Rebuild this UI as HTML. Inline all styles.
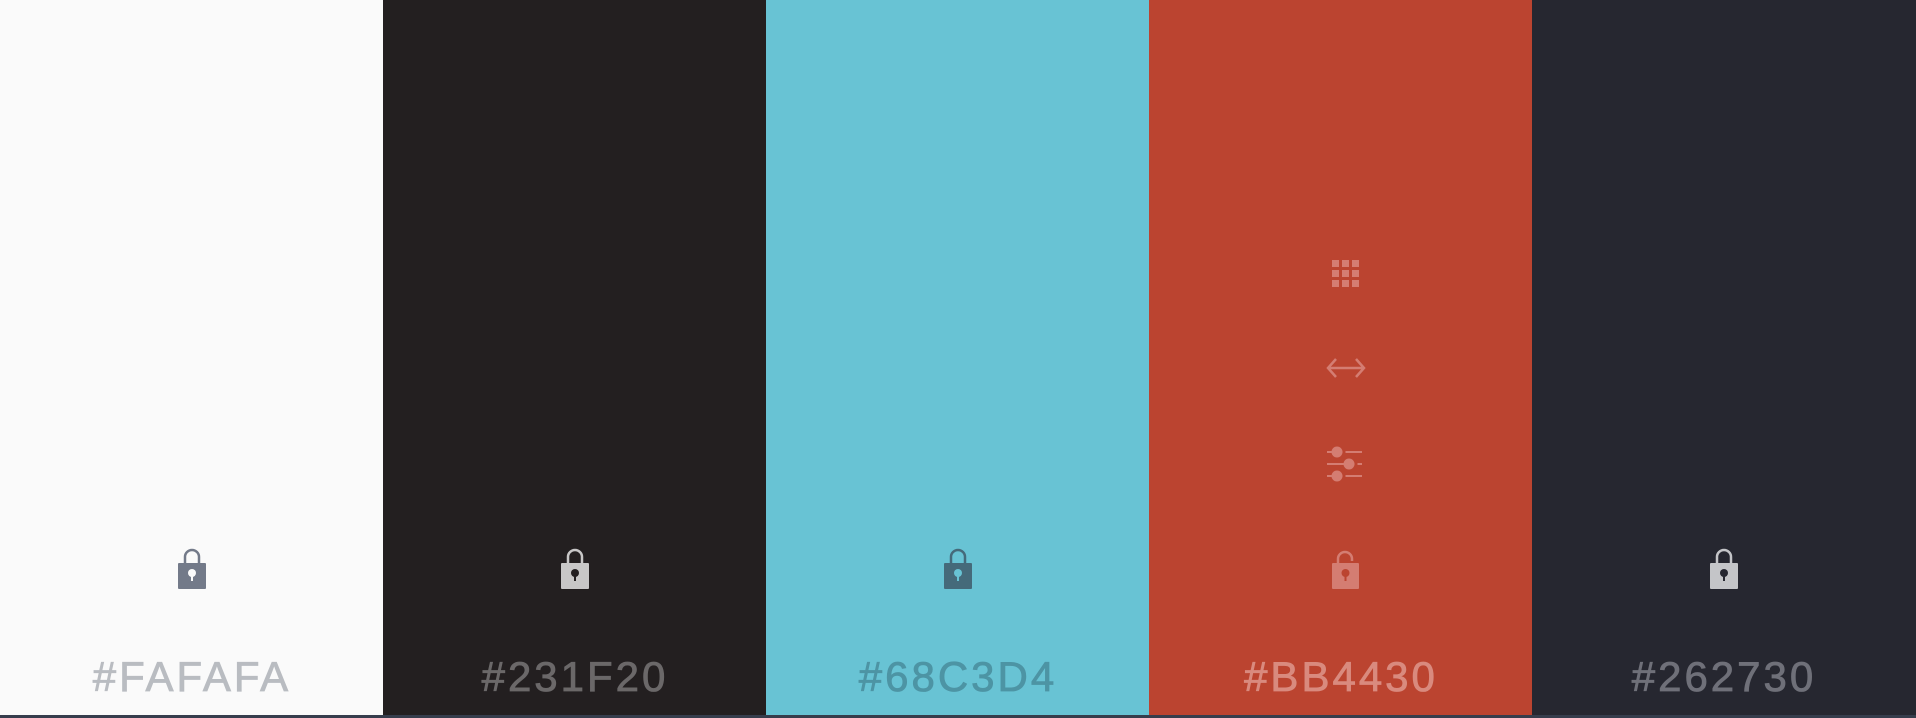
<!DOCTYPE html>
<html><head><style>
body{margin:0;width:1916px;height:718px;overflow:hidden;background:#363d4c;font-family:"Liberation Sans",sans-serif}
.c{position:absolute;top:0;height:715px;width:384px}
.t{position:absolute;left:0;right:0;top:654px;text-align:center;font-size:42px;letter-spacing:3px;line-height:46px;-webkit-text-stroke:0.8px currentColor}
.i{position:absolute}
</style></head><body>
<div class="c" style="left:0;background:#fafafa"><div class="t" style="color:#b9bcc1">#FAFAFA</div>
<svg class="i" style="left:177px;top:548px" width="30" height="42" viewBox="0 0 30 42"><path d="M8 16V9a7 7 0 0 1 14 0v7" fill="none" stroke="#737a89" stroke-width="2.5"/><rect x="1" y="15" width="28" height="26" rx="1" fill="#737a89"/><circle cx="15" cy="25" r="4" fill="#fafafa"/><rect x="14" y="26" width="2" height="7" fill="#fafafa"/></svg></div>
<div class="c" style="left:383px;background:#231f20"><div class="t" style="color:#6b6869">#231F20</div>
<svg class="i" style="left:177px;top:548px" width="30" height="42" viewBox="0 0 30 42"><path d="M8 16V9a7 7 0 0 1 14 0v7" fill="none" stroke="#c8c7c7" stroke-width="2.5"/><rect x="1" y="15" width="28" height="26" rx="1" fill="#c8c7c7"/><circle cx="15" cy="25" r="4" fill="#231f20"/><rect x="14" y="26" width="2" height="7" fill="#231f20"/></svg></div>
<div class="c" style="left:766px;background:#68c3d4"><div class="t" style="color:#4d94a4">#68C3D4</div>
<svg class="i" style="left:177px;top:548px" width="30" height="42" viewBox="0 0 30 42"><path d="M8 16V9a7 7 0 0 1 14 0v7" fill="none" stroke="#456a7a" stroke-width="2.5"/><rect x="1" y="15" width="28" height="26" rx="1" fill="#456a7a"/><circle cx="15" cy="25" r="4" fill="#68c3d4"/><rect x="14" y="26" width="2" height="7" fill="#68c3d4"/></svg></div>
<div class="c" style="left:1149px;background:#bb4430"><div class="t" style="color:#d98a7e">#BB4430</div>
<svg class="i" style="left:182px;top:259px" width="30" height="30" viewBox="0 0 30 30" fill="#d47d72"><rect x="1" y="1" width="7" height="7"/><rect x="11" y="1" width="7" height="7"/><rect x="21" y="1" width="7" height="7"/><rect x="1" y="11" width="7" height="7"/><rect x="11" y="11" width="7" height="7"/><rect x="21" y="11" width="7" height="7"/><rect x="1" y="21" width="7" height="7"/><rect x="11" y="21" width="7" height="7"/><rect x="21" y="21" width="7" height="7"/></svg>
<svg class="i" style="left:177px;top:356px" width="40" height="24" viewBox="0 0 40 24" fill="none" stroke="#d47d72" stroke-width="2.5"><path d="M2 12h36M10 3l-8 9 8 9M30 3l8 9-8 9"/></svg>
<svg class="i" style="left:178px;top:446px" width="38" height="38" viewBox="0 0 38 38" fill="#d47d72"><rect x="0" y="5" width="35" height="2"/><rect x="0" y="17" width="35" height="2"/><rect x="0" y="29" width="35" height="2"/><circle cx="10" cy="6" r="5.5"/><circle cx="22" cy="18" r="5.5"/><circle cx="10" cy="30" r="5.5"/><rect x="15.5" y="4" width="3" height="4" fill="#bb4430"/><rect x="27.5" y="16" width="3" height="4" fill="#bb4430"/><rect x="15.5" y="28" width="3" height="4" fill="#bb4430"/></svg>
<svg class="i" style="left:182px;top:550px" width="30" height="40" viewBox="0 0 30 40"><path d="M7 14V9a7 7 0 0 1 14 0v2" fill="none" stroke="#d47d72" stroke-width="2.5"/><rect x="1" y="13" width="27" height="26" rx="1" fill="#d47d72"/><circle cx="14.5" cy="23" r="4" fill="#bb4430"/><rect x="13.5" y="24" width="2" height="7" fill="#bb4430"/></svg></div>
<div class="c" style="left:1532px;width:384px;background:#262730"><div class="t" style="color:#6f7079">#262730</div>
<svg class="i" style="left:177px;top:548px" width="30" height="42" viewBox="0 0 30 42"><path d="M8 16V9a7 7 0 0 1 14 0v7" fill="none" stroke="#c4c5c8" stroke-width="2.5"/><rect x="1" y="15" width="28" height="26" rx="1" fill="#c4c5c8"/><circle cx="15" cy="25" r="4" fill="#262730"/><rect x="14" y="26" width="2" height="7" fill="#262730"/></svg></div>
</body></html>
